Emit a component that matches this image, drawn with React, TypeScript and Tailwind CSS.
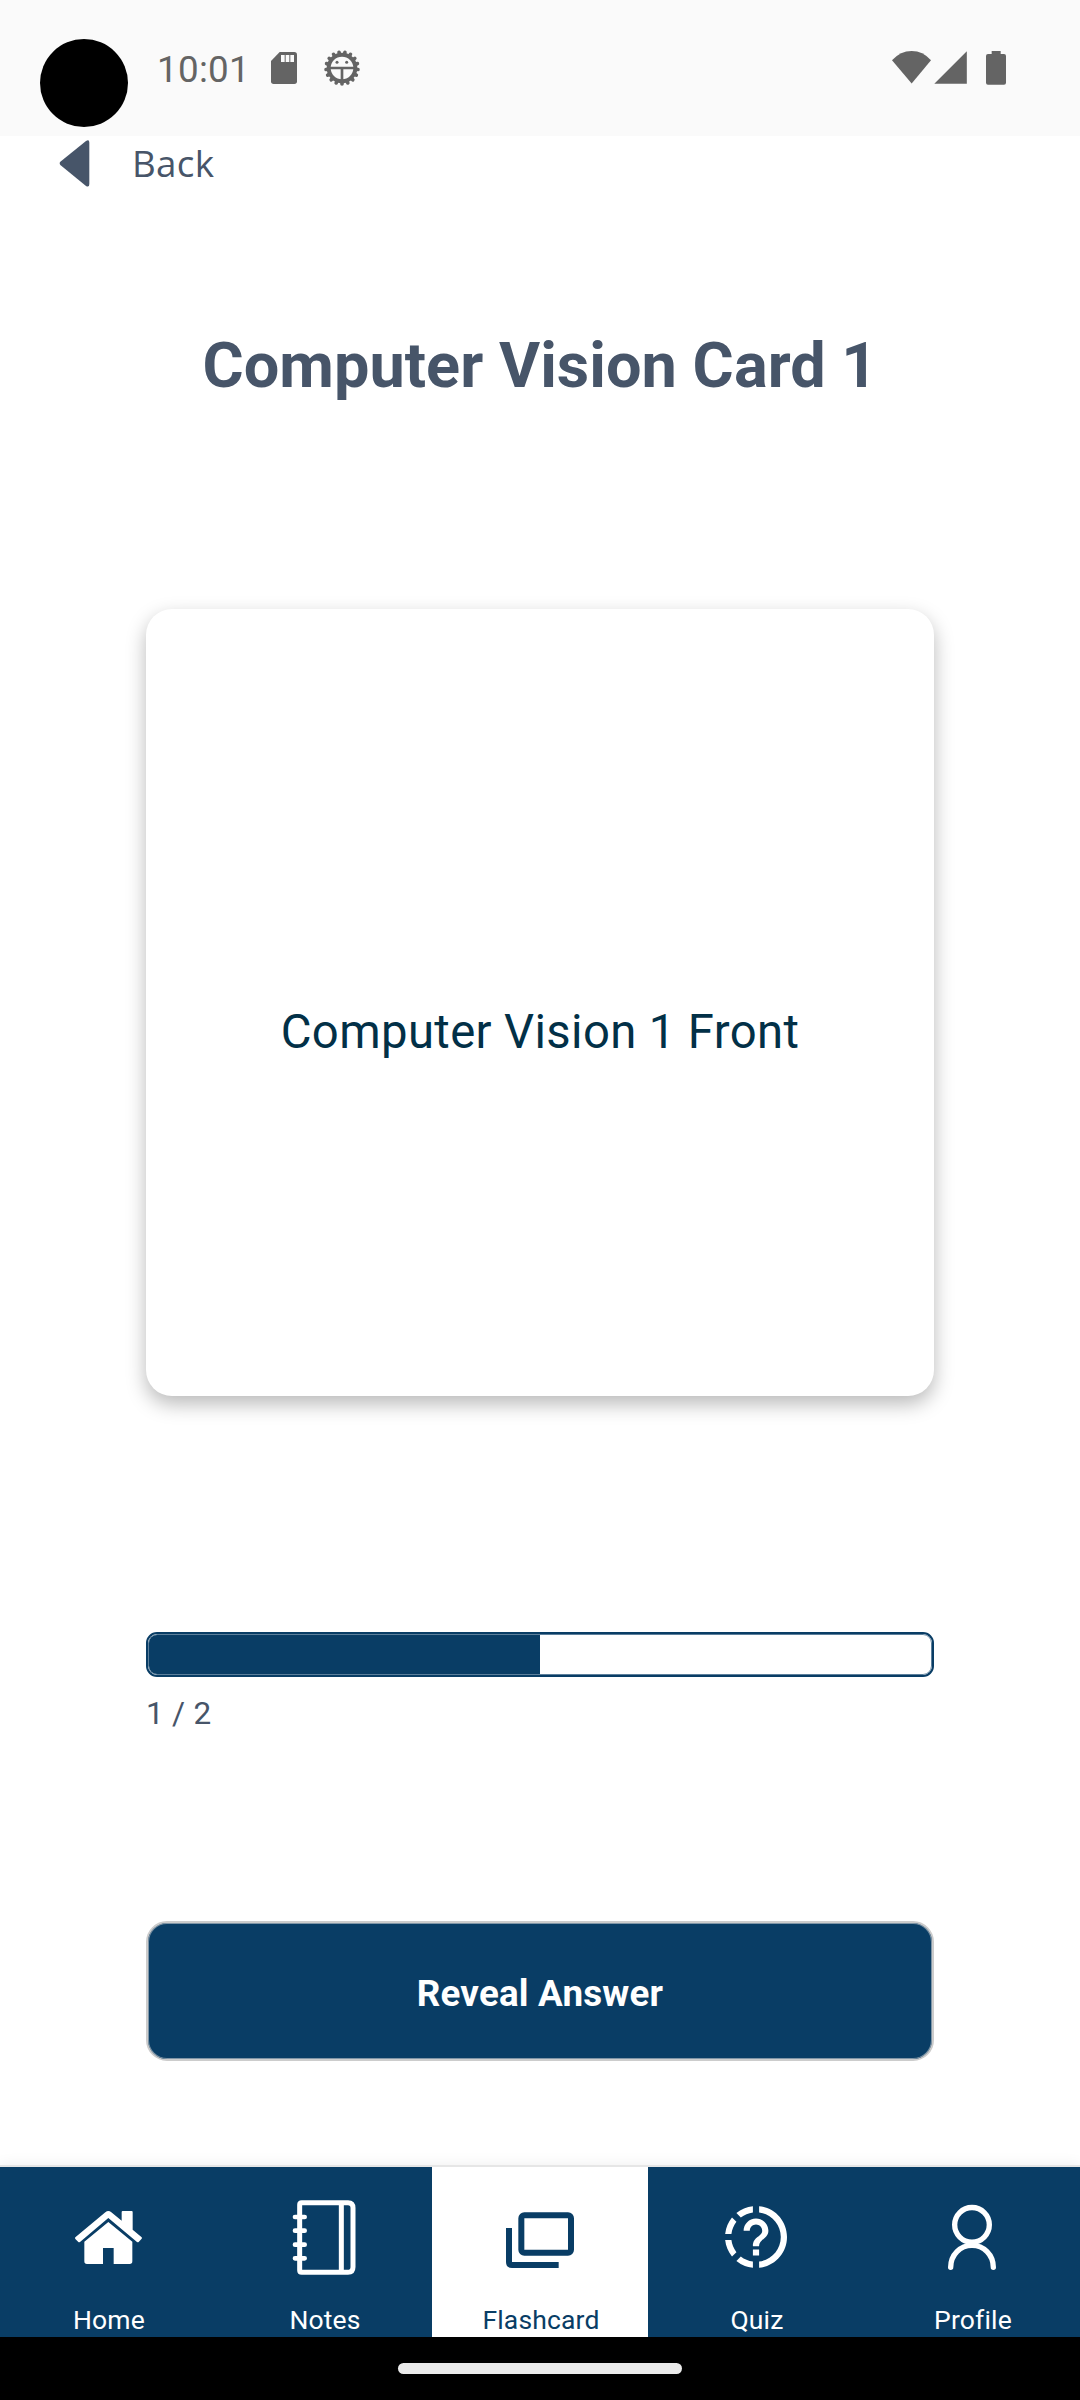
import type { ReactNode } from "react";

const teeth = Array.from({ length: 17 }, (_, i) => (i * 360) / 17);

function StatusBar() {
  return (
    <header className="flex h-[136px] shrink-0 items-start bg-[#fafafa] pl-10 text-[#646464]">
      <div className="mt-[39px] size-[88px] rounded-full bg-black" />
      <span className="mt-[48px] ml-[29px] w-[114px] text-[36.75px] leading-[44px] tracking-[0.3px] whitespace-nowrap">10:01</span>
      <svg className="mt-[52px] h-8 w-[26px]" viewBox="813 156 78 96" fill="currentColor">
        <path d="M839 156h44a8 8 0 0 1 8 8v80a8 8 0 0 1-8 8h-62a8 8 0 0 1-8-8v-61z" />
        <path fill="#fafafa" d="M843 165h11v21h-11zM857 165h11v21h-11zM871 165h11v21h-11z" />
      </svg>
      <svg className="mt-[48px] ml-[25px] h-10 w-10" viewBox="966 144 120 120" fill="none" stroke="currentColor">
        <circle cx="1026" cy="204" r="40" strokeWidth="12" />
        {teeth.map((a) => (
          <path key={a} d="M1026 246v6" strokeWidth="11" strokeLinecap="round" transform={`rotate(${a} 1026 204)`} />
        ))}
        <path d="M988 204h76M1026 204v40" strokeWidth="8" />
        <circle cx="1011" cy="187" r="4.5" fill="currentColor" stroke="none" />
        <circle cx="1040" cy="187" r="4.5" fill="currentColor" stroke="none" />
      </svg>
      <svg className="mt-[50px] ml-auto mr-[74px] h-9 w-[114px]" viewBox="96 90 342 108" fill="currentColor">
        <path d="M96 121Q121 93 155 93T213 121L155 190.500z" />
        <path d="M223 191.500L320.500 94v97.500z" />
        <path d="M395 93h27v9h10a6 6 0 0 1 6 6v80a6 6 0 0 1-6 6h-48a6 6 0 0 1-6-6v-80a6 6 0 0 1 6-6h11z" />
      </svg>
    </header>
  );
}

function HomeIcon() {
  return (
    <svg className="size-[90px]" viewBox="189 120 270 270" fill="currentColor">
      <path d="M226 262L316 187Q325 179 334 187L365 212V186Q365 183 368 183H395Q398 183 398 186V239L425 262Q427 264 425 266L416 276Q414 278 411 276L325 204L240 276Q237 278 235 276L226 267Q224 264 226 262Z" />
      <path d="M325 216L397 275V334Q397 342 389 342H341V294H309V342H261Q253 342 253 334V275Z" />
    </svg>
  );
}

function NotesIcon() {
  return (
    <svg className="size-[90px]" viewBox="837 120 270 270" fill="none" stroke="currentColor" strokeWidth="15">
      <path d="M905 158H1044Q1059 158 1059 174V351Q1059 367 1044 367H905Q899 367 899 361V164Q899 158 905 158ZM1024 158V367" />
      <path d="M885 201H914M885 242H914M885 284H914M885 325H914" strokeWidth="14" strokeLinecap="round" />
    </svg>
  );
}

function FlashcardIcon() {
  return (
    <svg className="size-[90px]" viewBox="225 120 270 270" fill="none" stroke="currentColor" strokeWidth="18">
      <rect x="304" y="196" width="149" height="112" rx="9" />
      <path d="M267 234V336Q267 345 276 345H416" />
    </svg>
  );
}

function QuizIcon() {
  return (
    <svg className="size-[90px]" viewBox="93 120 270 270" fill="currentColor">
      <g transform="translate(116.4 149.4) scale(9.3)">
        <path d="M13 2.05v2.020c3.950.49 7 3.850 7 7.930s-3.050 7.440-7 7.930v2.020c5.050-.5 9-4.760 9-9.950s-3.950-9.450-9-9.950z" />
        <path d="M11 2.050c-2.010.2-3.840 1-5.320 2.210L7.100 5.690A7.940 7.940 0 0 1 11 4.070zM4.260 5.680A9.950 9.950 0 0 0 2.050 11h2.020c.19-1.460.76-2.790 1.620-3.900zM2.050 13c.2 2.010 1 3.840 2.210 5.320L5.690 16.900A7.940 7.940 0 0 1 4.070 13zM5.680 19.740A9.980 9.980 0 0 0 11 21.950v-2.020a7.940 7.940 0 0 1-3.900-1.620z" />
        <path d="M12 6c-2.210 0-4 1.790-4 4h2c0-1.100.9-2 2-2s2 .9 2 2c0 2-3 1.750-3 5h2c0-2.250 3-2.500 3-5 0-2.210-1.790-4-4-4zM11 16h2v2h-2z" />
      </g>
    </svg>
  );
}

function ProfileIcon() {
  return (
    <svg className="size-[90px]" viewBox="741 120 270 270" fill="none" stroke="currentColor" strokeWidth="16" strokeLinecap="round">
      <circle cx="876" cy="224.500" r="52" />
      <path d="M812 352C812 314 841 286 876 286S940 314 940 352" />
    </svg>
  );
}

function Tab({ label, icon, active = false }: { label: string; icon: ReactNode; active?: boolean }) {
  return (
    <button
      className={
        active
          ? "flex h-full flex-1 flex-col items-center bg-white pt-[23px] text-[#093d65]"
          : "flex h-full flex-1 flex-col items-center bg-[#093d65] pt-[23px] text-white"
      }
    >
      {icon}
      <span className="mt-[24px] pl-[2px] text-[26.5px] leading-[31px] tracking-[0.15px]">{label}</span>
    </button>
  );
}

export default function App() {
  return (
    <div className="flex h-[2400px] w-[1080px] flex-col overflow-hidden bg-white font-['Roboto',sans-serif]">
      <StatusBar />
      <main className="flex min-h-0 flex-1 flex-col">
        <button className="flex h-[54px] items-center pl-[59px] text-[#475569]">
          <svg className="h-[47px] w-[31px]" viewBox="177 419 93 141" fill="currentColor">
            <path d="M181 484L258 422Q268 416 268 427V551Q268 562 258 557L181 494Q177 489 181 484Z" />
          </svg>
          <span className="ml-[42px] font-['Open_Sans',sans-serif] text-[36.75px] leading-[50px] tracking-[0.3px]">Back</span>
        </button>
        <h1 className="mt-[139px] text-center text-[63px] leading-[74px] font-bold tracking-[0.04px] text-[#475569]">
          Computer Vision Card 1
        </h1>
        <section className="mx-[146px] mt-[206px] flex h-[787px] items-center justify-center rounded-[26px] bg-white shadow-[0_8px_20px_rgba(0,0,0,0.28)]">
          <p className="mt-[59px] text-[47.25px] leading-[56px] tracking-[0.37px] text-[#023047]">Computer Vision 1 Front</p>
        </section>
        <div className="mx-[146px] mt-[236px] h-[45px] overflow-hidden rounded-[11px] border-2 border-[#093d65] bg-white">
          <div className="h-full rounded-[9px] border border-[#5c7f9b]">
            <div className="h-full w-1/2 rounded-l-lg bg-[#093d65]" />
          </div>
        </div>
        <p className="mt-[18px] ml-[146px] text-[31.5px] leading-[38px] tracking-[0.3px] text-[#475569]">1 / 2</p>
        <button className="mx-[146px] mt-[188px] flex h-[140px] items-center justify-center rounded-[21px] border-2 border-[#cccccc] bg-[#093d65] pt-[5px] text-[36.75px] leading-[44px] font-bold tracking-[0.2px] text-white shadow-[inset_0_0_0_1px_#7f95a6]">
          Reveal Answer
        </button>
      </main>
      <nav className="flex h-[172px] shrink-0 border-t-2 border-[#e6e6e6] shadow-[0_0_14px_rgba(0,0,0,0.07)]">
        <Tab label="Home" icon={<HomeIcon />} />
        <Tab label="Notes" icon={<NotesIcon />} />
        <Tab label="Flashcard" icon={<FlashcardIcon />} active />
        <Tab label="Quiz" icon={<QuizIcon />} />
        <Tab label="Profile" icon={<ProfileIcon />} />
      </nav>
      <footer className="flex h-[63px] shrink-0 justify-center bg-black pt-[26px]">
        <div className="h-[11px] w-[284px] rounded-full bg-[#ebebeb]" />
      </footer>
    </div>
  );
}
